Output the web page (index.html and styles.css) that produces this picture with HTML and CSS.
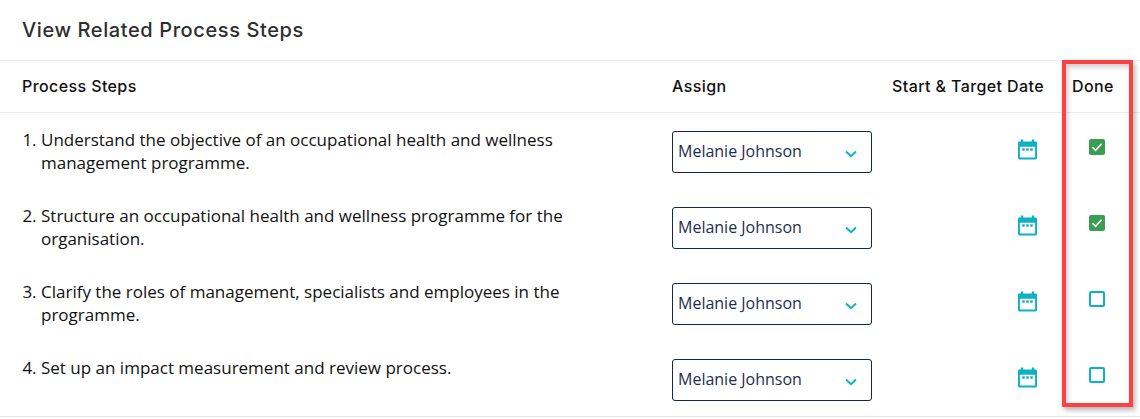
FILE: index.html
```html
<!DOCTYPE html>
<html lang="en">

<head>
    <meta charset="UTF-8">
    <title>View Related Process Steps</title>
    <link rel="stylesheet" href="styles.css">
</head>

<body>
    <div class="panel">
        <h2 class="panel-title">View Related Process Steps</h2>

        <div class="row head">
            <div>Process Steps</div>
            <div>Assign</div>
            <div>Start &amp; Target Date</div>
            <div>Done</div>
        </div>

        <div class="row step">
            <ol class="step-text" start="1"><li>Understand the objective of an occupational health and wellness management programme.</li></ol>
            <div class="select"><span>Melanie Johnson</span><svg class="chevron" viewBox="0 0 12 8"><path d="M1 1.5 6 6.2 11 1.5" /></svg></div>
            <div class="date"><svg class="calendar" viewBox="0 0 20 21"><path class="cal-fill" fill-rule="evenodd" d="M3 0h2.500v2h9V0H17v2h1.500A1.500 1.500 0 0 1 20 3.500v16a1.500 1.500 0 0 1-1.500 1.500h-17A1.500 1.500 0 0 1 0 19.500v-16A1.500 1.500 0 0 1 1.500 2H3zM2 7.500V19h16V7.500z" /><path class="cal-fill" d="M4.500 9.300h2.600v2.400H4.500zM8.700 9.300h2.600v2.400H8.700zM12.900 9.300h2.600v2.400h-2.600z" /></svg></div>
            <div class="done"><span class="check on"><svg viewBox="0 0 16 16"><path d="M3.500 8.300 6.600 11.300 12.600 4.800" /></svg></span></div>
        </div>

        <div class="row step">
            <ol class="step-text" start="2"><li>Structure an occupational health and wellness programme for the organisation.</li></ol>
            <div class="select"><span>Melanie Johnson</span><svg class="chevron" viewBox="0 0 12 8"><path d="M1 1.5 6 6.2 11 1.5" /></svg></div>
            <div class="date"><svg class="calendar" viewBox="0 0 20 21"><path class="cal-fill" fill-rule="evenodd" d="M3 0h2.500v2h9V0H17v2h1.500A1.500 1.500 0 0 1 20 3.500v16a1.500 1.500 0 0 1-1.500 1.500h-17A1.500 1.500 0 0 1 0 19.500v-16A1.500 1.500 0 0 1 1.500 2H3zM2 7.500V19h16V7.500z" /><path class="cal-fill" d="M4.500 9.300h2.600v2.400H4.500zM8.700 9.300h2.600v2.400H8.700zM12.900 9.300h2.600v2.400h-2.600z" /></svg></div>
            <div class="done"><span class="check on"><svg viewBox="0 0 16 16"><path d="M3.500 8.300 6.600 11.300 12.600 4.800" /></svg></span></div>
        </div>

        <div class="row step">
            <ol class="step-text" start="3"><li>Clarify the roles of management, specialists and employees in the programme.</li></ol>
            <div class="select"><span>Melanie Johnson</span><svg class="chevron" viewBox="0 0 12 8"><path d="M1 1.5 6 6.2 11 1.5" /></svg></div>
            <div class="date"><svg class="calendar" viewBox="0 0 20 21"><path class="cal-fill" fill-rule="evenodd" d="M3 0h2.500v2h9V0H17v2h1.500A1.500 1.500 0 0 1 20 3.500v16a1.500 1.500 0 0 1-1.500 1.500h-17A1.500 1.500 0 0 1 0 19.500v-16A1.500 1.500 0 0 1 1.500 2H3zM2 7.500V19h16V7.500z" /><path class="cal-fill" d="M4.500 9.300h2.600v2.400H4.500zM8.700 9.300h2.600v2.400H8.700zM12.900 9.300h2.600v2.400h-2.600z" /></svg></div>
            <div class="done"><span class="check"></span></div>
        </div>

        <div class="row step">
            <ol class="step-text" start="4"><li>Set up an impact measurement and review process.</li></ol>
            <div class="select"><span>Melanie Johnson</span><svg class="chevron" viewBox="0 0 12 8"><path d="M1 1.5 6 6.2 11 1.5" /></svg></div>
            <div class="date"><svg class="calendar" viewBox="0 0 20 21"><path class="cal-fill" fill-rule="evenodd" d="M3 0h2.500v2h9V0H17v2h1.500A1.500 1.500 0 0 1 20 3.500v16a1.500 1.500 0 0 1-1.500 1.500h-17A1.500 1.500 0 0 1 0 19.500v-16A1.500 1.500 0 0 1 1.500 2H3zM2 7.500V19h16V7.500z" /><path class="cal-fill" d="M4.500 9.300h2.600v2.400H4.500zM8.700 9.300h2.600v2.400H8.700zM12.900 9.300h2.600v2.400h-2.600z" /></svg></div>
            <div class="done"><span class="check"></span></div>
        </div>

        <div class="highlight"></div>
    </div>
</body>

</html>
```

FILE: styles.css
```css
* {
    margin: 0;
    padding: 0;
    box-sizing: border-box;
}

body {
    background-color: white;
    font-family: "Open Sans", sans-serif;
    color: #111;
    overflow: hidden;
}

.panel {
    position: relative;
    width: 1140px;
    height: 419px;
}

.panel-title {
    height: 61px;
    padding: 17px 0 0 22px;
    border-bottom: 1px solid #ececec;
    font-family: Inter, sans-serif;
    font-size: 20px;
    line-height: 26px;
    font-weight: 500;
    letter-spacing: 0.6px;
    color: #2e2e2e;
}

.row {
    display: grid;
    grid-template-columns: 650px 220px 180px 68px;
    padding-left: 22px;
    border-bottom: 1px solid #ececec;
}

.head {
    height: 52px;
    padding-bottom: 1px;
    align-items: center;
    font-family: Inter, sans-serif;
    font-size: 16px;
    font-weight: 500;
    letter-spacing: 0.4px;
    color: #111;
}

.step {
    height: 76px;
    padding-top: 18px;
    border-bottom: none;
}

.step-text {
    width: 565px;
    padding-left: 19px;
    font-size: 17px;
    line-height: 23px;
    margin-top: -3px;
}

.select {
    width: 200px;
    height: 42px;
    display: flex;
    align-items: center;
    justify-content: space-between;
    padding: 0 14px 2px 5px;
    border: 1px solid #14284b;
    border-radius: 3px;
    font-size: 16px;
    color: #1c2e4f;
}

.chevron {
    width: 12px;
    height: 8px;
    margin-top: 6px;
    fill: none;
    stroke: #0bb3c6;
    stroke-width: 2;
}

.date {
    display: flex;
    justify-content: flex-end;
    padding: 8px 35px 0 0;
}

.calendar {
    width: 19px;
    height: 21px;
}

.cal-fill {
    fill: #0cb1c4;
}

.done {
    padding: 8px 0 0 17px;
}

.check {
    display: block;
    width: 16px;
    height: 16px;
    border: 2px solid #0cb1c4;
    border-radius: 2px;
}

.check.on {
    border: none;
    background-color: #3a9d51;
}

.check svg {
    display: block;
    width: 16px;
    height: 16px;
    fill: none;
    stroke: white;
    stroke-width: 1.6;
}

/* red annotation box drawn over the Done column */
.highlight {
    position: absolute;
    left: 1062px;
    top: 60px;
    width: 71px;
    height: 347px;
    border: 4px solid #fb4141;
    box-shadow: 2px 3px 5px rgba(0, 0, 0, 0.3), inset 2px 3px 5px rgba(0, 0, 0, 0.2);
}

.panel::after {
    content: "";
    position: absolute;
    left: 0;
    right: 0;
    top: 416px;
    height: 1px;
    background-color: #e4e4e4;
}
```
